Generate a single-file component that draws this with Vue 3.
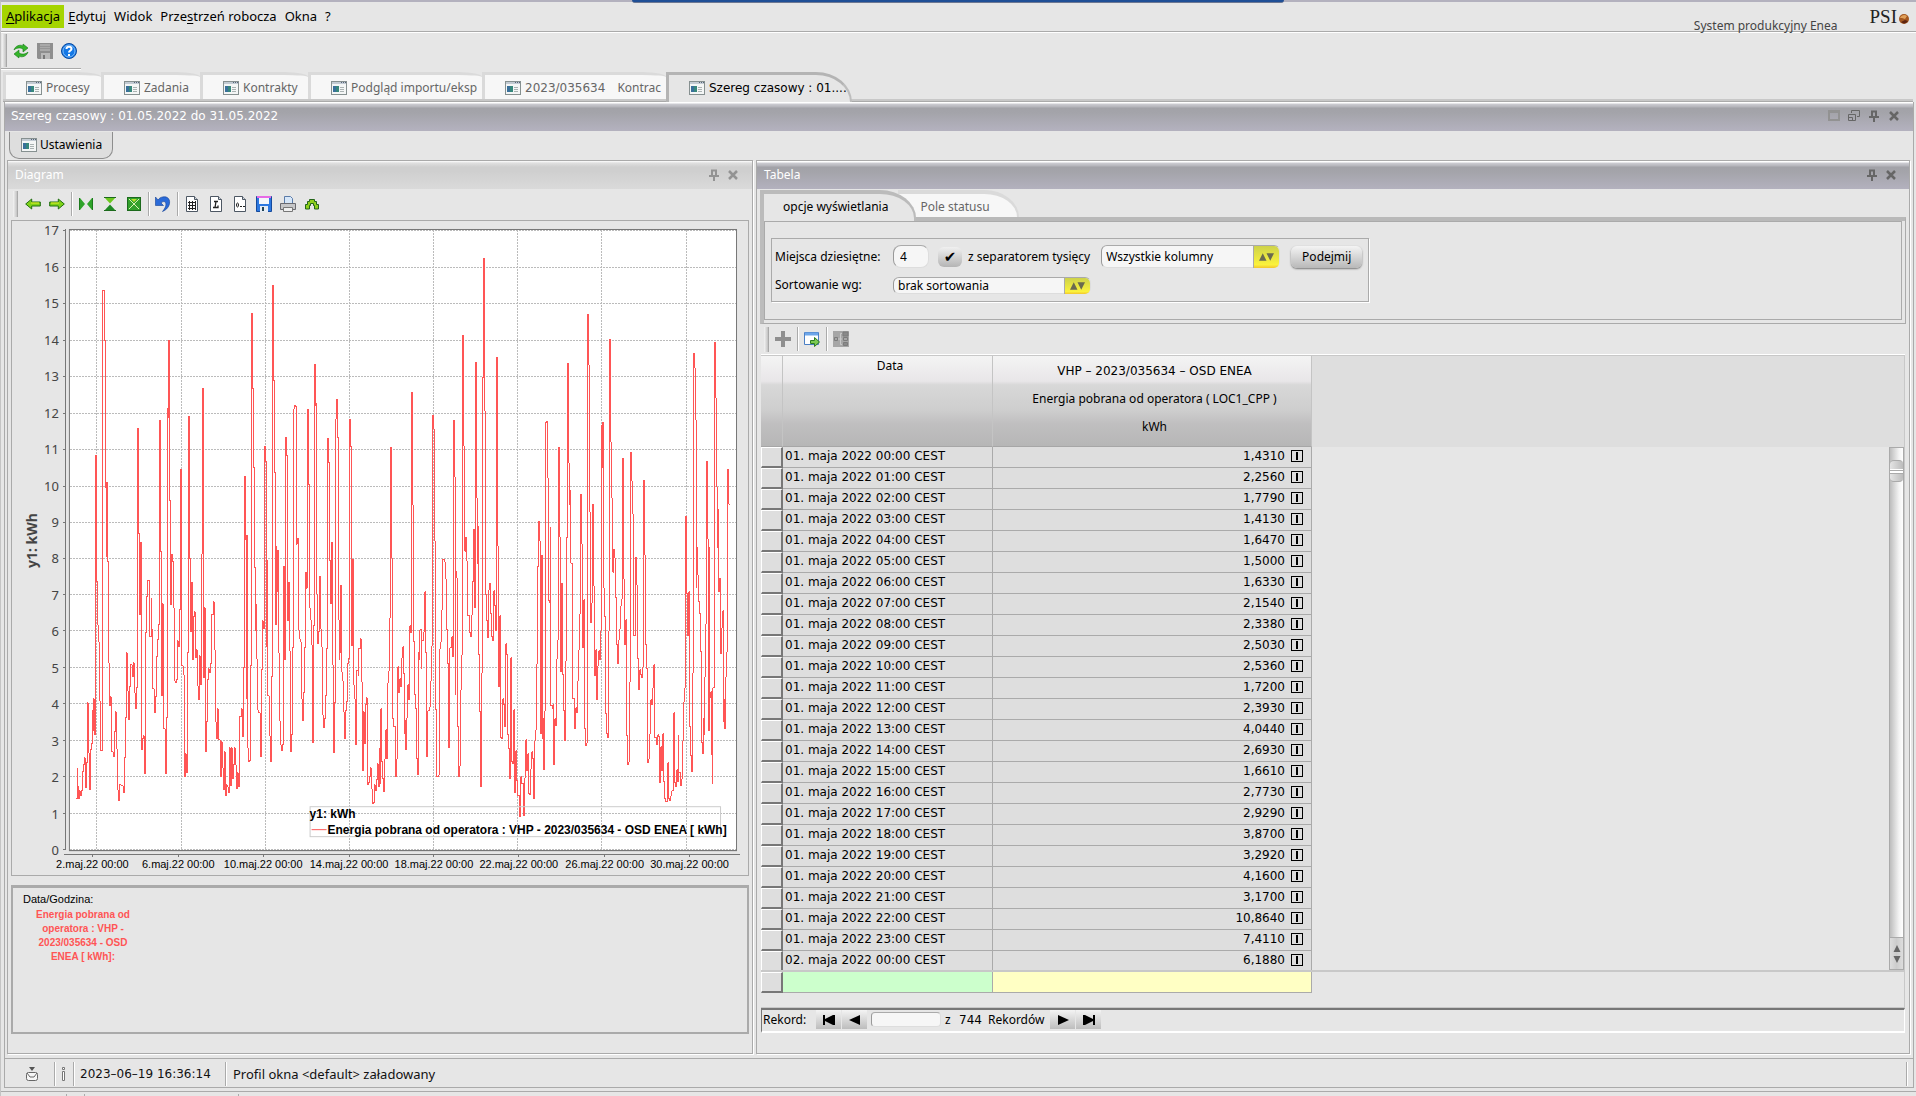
<script setup>
import { ref, computed } from 'vue'

const menu = [
  ['', 'A', 'plikacja'], ['', 'E', 'dytuj'], ['Widok', '', ''],
  ['Prze', 's', 'trzeń robocza'], ['Okna', '', ''], ['?', '', '']
]

const docTabs = [
  { label: 'Procesy', width: 98 },
  { label: 'Zadania', width: 99 },
  { label: 'Kontrakty', width: 108 },
  { label: 'Podgląd importu/eksp', width: 174 },
  { label: '2023/035634', extra: 'Kontrac', width: 184, numeric: true },
  { label: 'Szereg czasowy : 01....', width: 186, active: true, numeric: true }
]

const values = [
  '1,4310', '2,2560', '1,7790', '1,4130', '1,6470', '1,5000', '1,6330', '2,1540',
  '2,3380', '2,5030', '2,5360', '1,7200', '2,3930', '4,0440', '2,6930', '1,6610',
  '2,7730', '2,9290', '3,8700', '3,2920', '4,1600', '3,1700', '10,8640', '7,4110', '6,1880'
]
const rows = values.map((value, i) => ({
  date: `${i < 24 ? '01' : '02'}. maja 2022 ${String(i % 24).padStart(2, '0')}:00 CEST`,
  value
}))

const decimals = ref('4')
const separator = ref(true)
const record = ref('')

/* Load curve as "position,level" pairs, three units to a pixel; level 930 is 0 kWh. */
const trace = `
227,774 230,683 232,735 235,775 238,750 240,766 243,751 246,694 248,674 251,656 253,653 256,742 259,668 261,488 264,636 267,748
269,627 272,610 275,507 277,570 280,475 282,583 285,-258 288,120 290,254 293,304 296,481 299,632 304,632 305,445 307,-752 311,-602
314,-160 317,50 319,-176 322,62 325,367 328,497 331,470 334,634 338,650 341,575 344,515 347,625 350,748 355,781 358,733 362,737
368,758 371,653 374,532 377,338 380,450 383,538 386,440 389,373 395,410 398,368 401,458 404,506 407,442 410,274 412,-338 414,-24
417,223 420,4 422,627 425,596 428,587 431,700 434,277 437,170 440,119 448,290 452,173 454,265 457,445 461,518 466,470 469,350
472,298 475,253 478,-362 480,30 483,466 486,190 488,565 494,700 497,532 500,-398 502,-368 504,-602 507,-122 510,193 513,40 515,60
518,203 521,359 522,422 525,428 527,418 530,302 533,320 536,209 539,-216 542,30 544,376 548,404 551,710 555,640 558,698 560,338
563,-374 566,52 569,275 572,125 575,358 578,230 581,214 584,352 587,328 590,436 593,478 596,347 600,434 603,40 606,-458 608,412
611,203 614,634 617,545 620,418 623,386 626,397 629,370 634,223 638,184 641,328 644,545 648,595 652,505 655,598 659,710 662,604
665,682 668,748 671,634 674,766 677,734 681,740 684,757 686,622 689,737 692,622 695,716 698,673 701,622 705,673 707,745 710,697
713,740 716,670 718,530 722,505 725,590 728,382 731,-194 734,-5 737,476 739,-18 741,622 743,664 747,661 749,376 752,-683 755,-458
758,-221 761,80 764,272 767,190 769,355 772,508 775,517 779,650 782,388 785,241 788,265 791,-284 794,-239 798,320 800,58 802,466
806,586 809,664 812,410 815,-767 818,-482 821,-206 824,254 827,16 829,155 831,28 834,338 836,541 839,613 842,631 845,613 848,76
851,358 854,-311 857,-257 861,241 864,125 867,331 869,634 872,583 875,322 878,-395 881,-407 884,-404 887,10 890,-8 893,268 896,295
900,304 903,475 906,541 908,457 911,322 915,95 918,142 920,-396 923,-170 926,203 929,238 932,313 935,607 938,256 941,-530 944,-407
947,-413 949,160 952,310 955,275 957,106 960,265 963,320 965,523 969,562 973,535 976,466 978,325 981,-308 984,-236 987,58 990,190
992,4 995,373 998,520 1000,637 1002,487 1004,-365 1007,-425 1010,-311 1013,238 1016,358 1018,338 1020,132 1022,394 1026,421
1028,514 1032,596 1035,511 1037,484 1040,370 1043,355 1046,-365 1049,-284 1052,316 1055,55 1058,433 1061,475 1064,613 1067,556
1069,391 1073,406 1075,325 1079,295 1082,424 1085,612 1087,690 1089,514 1092,610 1094,493 1098,472 1100,733 1104,727 1106,710
1109,682 1112,745 1115,790 1119,787 1121,733 1124,751 1127,718 1132,670 1134,739 1137,625 1139,730 1142,505 1145,664 1148,715
1151,754 1154,654 1157,568 1160,655 1163,427 1166,391 1169,233 1172,-281 1175,52 1178,535 1182,560 1187,710 1191,655 1193,568
1195,380 1198,457 1199,415 1202,440 1205,353 1208,320 1211,400 1214,580 1217,537 1219,628 1221,532 1224,433 1227,478 1229,256
1232,277 1235,-446 1238,-106 1241,304 1244,463 1247,505 1250,655 1253,703 1256,335 1259,358 1261,268 1265,385 1267,301 1272,274
1274,154 1277,338 1280,412 1282,650 1285,511 1289,499 1292,421 1295,316 1298,-377 1301,-335 1304,1 1307,508 1310,583 1312,710
1317,703 1319,325 1322,304 1325,290 1327,208 1330,55 1334,64 1337,116 1340,268 1343,370 1346,469 1348,622 1351,322 1355,290
1358,349 1361,-362 1364,-190 1367,463 1369,92 1371,112 1373,559 1376,710 1379,676 1382,448 1385,343 1388,-617 1391,-284 1394,31
1397,-11 1400,62 1403,95 1405,226 1409,277 1414,289 1415,223 1418,121 1421,-35 1424,202 1427,-536 1430,-128 1433,70 1435,-44
1437,343 1439,514 1442,739 1445,397 1448,-491 1451,-848 1454,-388 1457,163 1460,241 1463,292 1466,148 1469,126 1472,220 1475,289
1478,301 1481,151 1484,196 1487,271 1490,-551 1493,16 1496,439 1499,226 1502,592 1506,596 1508,475 1511,494 1514,559 1517,310
1520,343 1523,583 1526,625 1529,715 1532,352 1535,664 1538,670 1541,508 1544,757 1547,631 1550,721 1555,766 1559,829 1562,710
1567,730 1571,826 1574,712 1577,598 1580,691 1583,640 1586,760 1589,764 1592,685 1595,634 1598,655 1601,775 1604,601 1607,568
1610,370 1613,76 1616,-59 1619,1 1622,580 1625,43 1628,595 1630,535 1633,688 1635,511 1637,-356 1640,-359 1643,-188 1646,181
1650,187 1652,-41 1654,496 1658,505 1659,493 1661,673 1664,535 1667,556 1670,355 1673,298 1676,-281 1679,-11 1682,394 1685,127
1688,403 1691,511 1694,601 1697,361 1700,-11 1703,-533 1706,-233 1709,-107 1712,-152 1714,67 1718,118 1720,475 1724,565 1727,502
1730,517 1733,421 1736,328 1739,220 1742,-140 1745,10 1748,322 1751,178 1754,565 1757,616 1760,607 1763,-680 1766,-527 1769,-86
1772,247 1775,187 1778,-110 1781,136 1784,406 1787,328 1790,478 1793,376 1796,331 1799,358 1802,271 1805,-347 1807,-222 1809,-356
1812,142 1815,229 1817,520 1820,580 1823,592 1826,271 1829,-605 1832,-296 1835,-128 1838,94 1841,25 1844,52 1848,172 1851,313
1853,370 1856,298 1859,265 1862,196 1866,175 1868,100 1870,-248 1872,115 1875,313 1878,238 1880,586 1883,673 1886,664 1889,424
1893,-119 1894,-266 1896,-179 1900,-80 1903,286 1907,48 1910,133 1913,355 1916,448 1919,388 1922,403 1925,412 1928,380 1931,-182
1934,43 1937,172 1939,313 1942,385 1944,667 1948,655 1949,580 1952,478 1957,493 1959,442 1963,373 1966,592 1970,613 1973,583
1977,590 1979,727 1982,619 1985,691 1988,580 1991,724 1994,775 1998,784 2003,667 2006,775 2010,781 2014,766 2017,751 2021,517
2024,727 2027,739 2030,688 2034,724 2036,583 2038,697 2042,736 2045,715 2048,601 2051,484 2054,442 2057,-74 2060,160 2063,287
2066,154 2069,559 2072,646 2075,694 2078,397 2081,-563 2084,-518 2088,-361 2090,142 2092,19 2094,103 2097,184 2100,220 2103,334
2105,607 2109,640 2111,532 2113,583 2115,410 2117,250 2120,-239 2123,-4 2126,571 2129,19 2131,472 2133,454 2135,643 2138,730
2140,442 2144,-596 2147,-428 2150,-161 2153,22 2155,-95 2157,154 2159,112 2162,340 2165,262 2168,211 2171,544 2173,478 2176,565
2178,409 2181,334 2183,-215 2186,-110 2190,-110`

const tracePath = computed(() =>
  trace.trim().split(/\s+/).map((pair, i) => {
    const [px, level] = pair.split(',').map(Number)
    const x = Math.round(px / 3) - 11.5
    const y = Math.floor(320 + level / 3) + 0.5
    return i ? `H${x}V${y}` : `M${x} ${y}`
  }).join('')
)

const yTicks = Array.from({ length: 18 }, (_, v) => ({ v, y: Math.round(629 - v * 36.45) + 0.5 }))
const xTicks = [
  { day: 2, grid: 84.5, tick: 80.5 }, { day: 6, grid: 169.5, tick: 166.5 },
  { day: 10, grid: 253.5, tick: 251.5 }, { day: 14, grid: 337.5, tick: 337.5 },
  { day: 18, grid: 422.5, tick: 422.5 }, { day: 22, grid: 506.5, tick: 507.5 },
  { day: 26, grid: 590.5, tick: 593.5 }, { day: 30, grid: 675.5, tick: 678.5 }
]
</script>

<template>
  <svg class="symbols" aria-hidden="true">
    <symbol id="win" viewBox="0 0 16 16">
      <rect x=".5" y="1.5" width="15" height="13" fill="#f4f6f6" stroke="#869090" />
      <path d="M1 3h14" stroke="#c3cbd3" stroke-width="2" />
      <path d="M10 2.5h1M12 2.5h1M14 2.5h1" stroke="#56657a" />
      <rect x="2" y="6" width="6" height="6" fill="#37877c" />
      <path d="M2 6h3v6H2z" fill="#39709a" />
      <path d="M9 7.5h4M9 9.5h4M9 11.5h4" stroke="#aab2b2" />
    </symbol>
    <symbol id="pin" viewBox="0 0 12 12">
      <path d="M4 1v6M8 1v6M3 1.500h6M1 7h10M6 7v5" fill="none" stroke="currentColor" stroke-width="2" />
    </symbol>
    <symbol id="close" viewBox="0 0 12 12">
      <path d="M2 2l8 8M10 2l-8 8" stroke="currentColor" stroke-width="2.500" />
    </symbol>
    <symbol id="sheet" viewBox="0 0 16 16">
      <path d="M2.500 .5h8l3 3v12h-11z" fill="#fff" stroke="#4d5763" />
      <path d="M10.500 .5v3h3" fill="#cfd6dd" stroke="#4d5763" />
    </symbol>
    <symbol id="arrows" viewBox="0 0 16 8">
      <path d="M0 8L4 0l4 8zM8 0h8l-4 8z" fill="#6a6a50" />
    </symbol>
  </svg>

  <div class="app">
    <div class="notch"></div>
    <header class="menubar">
      <nav class="menu">
        <button v-for="(m, i) in menu" :key="i" :class="{ on: i === 0 }">{{ m[0] }}<u>{{ m[1] }}</u>{{ m[2] }}</button>
      </nav>
      <span class="system">System produkcyjny Enea</span>
      <span class="logo">PSI<svg width="12" height="12" viewBox="0 0 12 12"><circle cx="6" cy="6" r="5" fill="#a4571f" /><path d="M2 5c1-3 5-4 7-2l-2 3-3-1z" fill="#e0a05a" /><path d="M3 9c2 2 5 2 7-1l-3-1z" fill="#5d2410" /></svg></span>
    </header>

    <div class="toolbar main-tools">
      <i class="grip"></i>
      <button title="Odśwież"><svg width="16" height="16" viewBox="0 0 16 16"><path d="M1 7c1-4 6-6 9-4V1l5 4-5 4V6C7 4 3 5 1 7z" fill="#35b52b" stroke="#157a15" stroke-width=".6" /><path d="M15 9c-1 4-6 6-9 4v2l-5-4 5-4v3c3 2 7 1 9-1z" fill="#35b52b" stroke="#157a15" stroke-width=".6" /></svg></button>
      <button title="Zapisz"><svg width="16" height="16" viewBox="0 0 16 16"><path d="M0 0h16v16H1l-1-1z" fill="#8e8e8e" /><path d="M3 1h10v7H3z" fill="#a9a9a9" /><path d="M3 3.500h10M3 5.500h10" stroke="#959595" /><path d="M4 10h9v6H4z" fill="#b9b9b9" /><path d="M6 12h2v4H6z" fill="#777" /></svg></button>
      <button title="Pomoc"><svg width="16" height="16" viewBox="0 0 16 16"><circle cx="8" cy="8" r="7.500" fill="#1478e6" stroke="#0a4aa0" /><circle cx="8" cy="8" r="6" fill="none" stroke="#7db9f5" /><path d="M5.500 6c0-3 5-3 5 0 0 1.500-2.500 1.500-2.500 3.500M8 11v2" fill="none" stroke="#fff" stroke-width="2" /></svg></button>
    </div>

    <div class="doc-tabs">
      <button v-for="t in docTabs" :key="t.label" class="doc-tab" :class="{ active: t.active }" :style="{ width: t.width + 'px' }">
        <svg width="16" height="16"><use href="#win" /></svg><span :class="{ figures: t.numeric }">{{ t.label }}</span><span v-if="t.extra" class="extra">{{ t.extra }}</span>
      </button>
    </div>

    <main class="workspace">
      <div class="titlebar outer">
        <span class="figures">Szereg czasowy : 01.05.2022 do 31.05.2022</span>
        <span class="controls">
          <button title="Maksymalizuj" class="dim"><svg width="12" height="12" viewBox="0 0 12 12"><path d="M1 1h10v9H1z" fill="none" stroke="currentColor" stroke-width="2" /><path d="M0 2h12" stroke="currentColor" stroke-width="2" /></svg></button>
          <button title="Odepnij"><svg width="12" height="12" viewBox="0 0 12 12"><path d="M3.500 3V.5h8v6H9M.5 4.500h7v6h-7zM.5 7.500h4v3" fill="none" stroke="currentColor" /></svg></button>
          <button title="Przypnij"><svg width="12" height="12"><use href="#pin" /></svg></button>
          <button title="Zamknij"><svg width="12" height="12"><use href="#close" /></svg></button>
        </span>
      </div>

      <button class="settings"><svg width="16" height="16"><use href="#win" /></svg><span>Ustawienia</span></button>

      <div class="panes">
        <section class="pane">
          <div class="titlebar pale">
            <span>Diagram</span>
            <span class="controls">
              <button title="Przypnij"><svg width="12" height="12"><use href="#pin" /></svg></button>
              <button title="Zamknij"><svg width="12" height="12"><use href="#close" /></svg></button>
            </span>
          </div>
          <div class="toolbar chart-tools">
            <i class="grip"></i>
            <button title="Wstecz"><svg width="16" height="16" viewBox="0 0 16 16"><path d="M.7 8l6-5v3h8.600v4H6.700v3z" fill="#7fd219" stroke="#1f6e12" /><path d="M6 7h8" stroke="#e8f02a" /></svg></button>
            <button title="Dalej"><svg width="16" height="16" viewBox="0 0 16 16"><path d="M15.300 8l-6-5v3H.7v4h8.600v3z" fill="#7fd219" stroke="#1f6e12" /><path d="M2 7h8" stroke="#e8f02a" /></svg></button>
            <i class="sep"></i>
            <button title="Skala X"><svg width="16" height="16" viewBox="0 0 16 16"><path d="M2 2v12l5-6zM14 2v12L9 8z" fill="#2fa32a" /><path d="M1.500 2v12M14.500 2v12" stroke="#1c7a1c" /></svg></button>
            <button title="Skala Y"><svg width="16" height="16" viewBox="0 0 16 16"><path d="M2 1h12L8 7.500z" fill="#6cc81e" /><path d="M2 15h12L8 8.500z" fill="#1f8a25" /><path d="M2 1.500h12M2 14.500h12" stroke="#1c6a1c" /></svg></button>
            <button title="Dopasuj"><svg width="16" height="16" viewBox="0 0 16 16"><rect x="1.500" y="1.500" width="13" height="13" fill="#32a02c" stroke="#1c6a1c" /><path d="M3 3l10 10M13 3L3 13" stroke="#d8f0b0" /><path d="M5 3h6L8 6z" fill="#b5e02a" /></svg></button>
            <i class="sep"></i>
            <button title="Cofnij"><svg width="16" height="16" viewBox="0 0 16 16"><path d="M.5 1v8.500h8L6 7c4-4 8 1 1.500 8.500C17 12 17-1 7.500 1 5.500 1.300 4 2.500 3 4z" fill="#2a6ad8" stroke="#123f94" stroke-width=".6" /></svg></button>
            <i class="sep"></i>
            <button title="Siatka"><svg width="16" height="16" viewBox="0 0 16 16"><use href="#sheet" /><path d="M5.500 5v9M8.500 5v9M11.500 5v9M4 6.500h8M4 9.500h8M4 12.500h8" stroke="#222" /></svg></button>
            <button title="Legenda"><svg width="16" height="16" viewBox="0 0 16 16"><use href="#sheet" /><path d="M6 5.500h4M8 5.500l-1 6M5 11.500h5V9.500" fill="none" stroke="#222" stroke-width="1.300" /></svg></button>
            <button title="Zero"><svg width="16" height="16" viewBox="0 0 16 16"><use href="#sheet" /><ellipse cx="5.500" cy="9" rx="1" ry="2" fill="none" stroke="#222" /><path d="M8 10.500h2M11 10.500h2" stroke="#222" /></svg></button>
            <button title="Zapisz"><svg width="16" height="16" viewBox="0 0 16 16"><path d="M.5 .5h15v15h-15z" fill="#2c78e0" stroke="#164a9c" /><path d="M3 1h10v7H3z" fill="#f4f6fa" /><path d="M1 1h14" stroke="#e66be6" stroke-width="2" /><path d="M4 10h8v6H4z" fill="#e6ecf4" /><path d="M6 11h2v4H6z" fill="#245" /></svg></button>
            <button title="Drukuj"><svg width="16" height="16" viewBox="0 0 16 16"><path d="M4.500 8V.5h6l2 2V8" fill="#d6e6f8" stroke="#5a7ba8" /><path d="M.5 7.500h15v6H.5z" fill="#c6c6c8" stroke="#6a6a70" /><path d="M3.500 11.500h9v4h-9z" fill="#f0f0f0" stroke="#777" /></svg></button>
            <button title="Znajdź"><svg width="16" height="16" viewBox="0 0 16 16"><path d="M1.500 13V8.500h2V5.500h2V3.500h5v2h2v3h2V13h-4V9.500h-1v-2h-3v2h-1V13z" fill="#8fd01c" stroke="#24651a" /></svg></button>
          </div>

          <div class="chart">
            <svg class="plot" viewBox="0 0 737 655" role="img" aria-label="Energia pobrana od operatora">
              <rect x="57.500" y="8.500" width="668" height="622" fill="#fff" stroke="#777" />
              <g class="grid">
                <path v-for="t in yTicks" :key="t.v" :d="`M58 ${t.y}H725`" />
                <path v-for="t in xTicks" :key="t.day" :d="`M${t.grid} 9V630`" />
              </g>
              <path class="trace" :d="tracePath" />
              <g class="axis">
                <path d="M53.500 8V630M52 634.500H729M57 630.500H726" />
                <path v-for="t in yTicks" :key="t.v" :d="`M51 ${t.y}h3`" />
                <path v-for="t in xTicks" :key="t.day" :d="`M${t.tick} 635v2`" />
              </g>
              <g class="ylab"><text v-for="t in yTicks" :key="t.v" x="47" :y="t.y + 5">{{ t.v }}</text></g>
              <g class="xlab"><text v-for="t in xTicks" :key="t.day" :x="t.tick" y="648">{{ t.day }}.maj.22 00:00</text></g>
              <text class="ytitle" transform="translate(25 320) rotate(-90)">y1: kWh</text>
              <rect x="298.500" y="586.500" width="411" height="30" fill="none" stroke="#ccc" />
              <path d="M300 609.500h15" stroke="#ff5555" />
              <g class="legend"><text x="298" y="598">y1: kWh</text><text x="316" y="614">Energia pobrana od operatora : VHP - 2023/035634 - OSD ENEA [ kWh]</text></g>
            </svg>
          </div>

          <div class="readout">
            <p>Data/Godzina:</p>
            <p class="series">Energia pobrana od operatora : VHP - 2023/035634 - OSD ENEA [ kWh]:</p>
          </div>
        </section>

        <section class="pane">
          <div class="titlebar inner">
            <span>Tabela</span>
            <span class="controls">
              <button title="Przypnij"><svg width="12" height="12"><use href="#pin" /></svg></button>
              <button title="Zamknij"><svg width="12" height="12"><use href="#close" /></svg></button>
            </span>
          </div>

          <div class="opt-tabs">
            <button class="opt-tab active">opcje wyświetlania</button>
            <button class="opt-tab">Pole statusu</button>
          </div>
          <div class="opt-page"><div class="opt-inner">
            <form class="options" @submit.prevent>
              <div class="line">
                <label class="first" for="dec">Miejsca dziesiętne:</label>
                <input id="dec" v-model="decimals" class="field dec" type="text">
                <input id="sep" v-model="separator" class="tick" type="checkbox">
                <label for="sep">z separatorem tysięcy</label>
                <span class="combo wide"><select aria-label="Kolumny"><option>Wszystkie kolumny</option></select><span class="knob"><svg width="15" height="8"><use href="#arrows" /></svg></span></span>
                <button class="apply">Podejmij</button>
              </div>
              <div class="line">
                <label class="first" for="sort">Sortowanie wg:</label>
                <span class="combo sort"><select id="sort"><option>brak sortowania</option></select><span class="knob"><svg width="15" height="8"><use href="#arrows" /></svg></span></span>
              </div>
            </form>
          </div></div>

          <div class="toolbar table-tools">
            <i class="grip"></i>
            <button title="Dodaj"><svg width="16" height="16" viewBox="0 0 16 16"><path d="M6 0h4v6h6v4h-6v6H6v-6H0V6h6z" fill="#8f8f8f" /></svg></button>
            <i class="sep"></i>
            <button title="Eksport"><svg width="16" height="16" viewBox="0 0 16 16"><path d="M.5 1.500h14v12H.5z" fill="#fff" stroke="#4b7fc4" /><path d="M1 3h13" stroke="#6da6ea" stroke-width="3" /><path d="M6.500 9.500h4v-3l5 4.500-5 4.500v-3h-4z" fill="#7ccb52" stroke="#2c7a22" /></svg></button>
            <i class="sep"></i>
            <button title="Struktura"><svg width="16" height="16" viewBox="0 0 16 16"><path d="M0 0h16v16H0z" fill="#a6a6a6" /><path d="M9 2.500H7.500v11H9M5 8h4" fill="none" stroke="#c8c8c8" /><path d="M1.500 6.500h3v3h-3zM10.500 6.500h4v3h-4z" fill="none" stroke="#7c7c7c" /><path d="M10 1h5v4h-5zM10.500 11.500h4v3h-4z" fill="#8a8a8a" stroke="#7c7c7c" /></svg></button>
          </div>

          <div class="grid-area">
            <div class="grid-body">
              <table>
                <colgroup><col class="c0"><col class="c1"><col class="c2"></colgroup>
                <thead><tr>
                  <th></th><th class="date-head">Data</th>
                  <th><div class="figures">VHP – 2023/035634 – OSD ENEA</div><div>Energia pobrana od operatora ( LOC1_CPP )</div><div>kWh</div></th>
                </tr></thead>
                <tbody>
                  <tr v-for="r in rows" :key="r.date">
                    <td class="handle"></td><td class="date">{{ r.date }}</td>
                    <td class="num"><div><span>{{ r.value }}</span><i class="mark"></i></div></td>
                  </tr>
                </tbody>
              </table>
              <div class="scroll"><span class="thumb"></span><span class="steps"><svg width="8" height="18" viewBox="0 0 8 18"><path d="M4 0l3.500 7h-7zM4 18l3.500-7h-7z" fill="#666" /></svg></span></div>
            </div>
            <table class="sums">
              <colgroup><col class="c0"><col class="c1"><col class="c2"></colgroup>
              <tbody><tr><td class="handle"></td><td class="green"></td><td class="yellow"></td></tr></tbody>
            </table>
          </div>

          <div class="records">
            <label for="rec">Rekord:</label>
            <button title="Pierwszy"><svg width="12" height="10" viewBox="0 0 12 10"><path d="M0 0h2v4l8-4h2v10h-2L2 6v4H0z" /></svg></button>
            <button title="Poprzedni"><svg width="12" height="10" viewBox="0 0 12 10"><path d="M11 0v10L0 5z" /></svg></button>
            <input id="rec" v-model="record" class="field rec" type="text">
            <span class="of">z</span><span class="count">744</span><span class="word">Rekordów</span>
            <button title="Następny"><svg width="12" height="10" viewBox="0 0 12 10"><path d="M1 0v10l11-5z" /></svg></button>
            <button title="Ostatni"><svg width="12" height="10" viewBox="0 0 12 10"><path d="M12 0h-2v4L2 0H0v10h2l8-4v4h2z" /></svg></button>
          </div>
        </section>
      </div>

      <footer class="status">
        <span class="mail"><svg width="14" height="14" viewBox="0 0 14 14"><path d="M4 0h6L7 4z" fill="#555" /><rect x="1.500" y="5.500" width="11" height="8" rx="2" fill="#f6f6f6" stroke="#666" /><path d="M2 6l3 4h4l3-4" fill="none" stroke="#666" /></svg></span>
        <span class="info"><svg width="4" height="14" viewBox="0 0 4 14"><path d="M.5 .5h2v2h-2zM.5 4.500h2v9h-2z" fill="#fff" stroke="#777" /></svg></span>
        <span class="stamp figures">2023–06–19 16:36:14</span>
        <span class="message">Profil okna &lt;default&gt; załadowany</span>
      </footer>
    </main>
    <div class="underbar"><i></i><i></i><i></i></div>
  </div>
</template>

<style>
body { background: #e6e6e6; }
</style>

<style scoped>
.symbols { position: absolute; width: 0; height: 0; }
.app { min-height: 100vh; box-sizing: border-box; border-top: 2px solid #b3b1be; border-left: 1px solid #c4c4c4; background: #e6e6e6; color: #000; font: 12px/16px "Noto Sans", sans-serif; display: flex; flex-direction: column; overflow: hidden; }
.figures { font-family: "DejaVu Sans", sans-serif; }
button { border: 0; padding: 0; margin: 0; background: none; font: inherit; color: inherit; display: flex; align-items: center; flex: none; }
svg { display: block; flex: none; }
.notch { position: absolute; top: 0; left: 33%; width: 34%; height: 3px; box-sizing: border-box; background: #1f4f96; border-bottom: 1px solid #6d7893; border-radius: 0 0 4px 4px; }

.menubar { display: flex; height: 29px; border-bottom: 1px solid #aaa; box-shadow: 0 1px #fff; }
.menu { display: flex; flex: 1; padding: 3px 0 0 1px; font-size: 13px; }
.menu button { height: 23px; padding: 0 4px 2px; display: block; }
.menu .on { background: #a5d400; }
.menu u { text-underline-offset: 2px; }
.system { color: #444; padding-top: 16px; height: 13px; line-height: 16px; }
.logo { display: flex; align-items: center; gap: 1px; height: 20px; margin: 5px 6px 0 32px; font: 19px/20px "Liberation Serif", serif; color: #222; }
.logo svg { margin-top: 4px; }

.toolbar { display: flex; align-items: center; }
.grip { width: 5px; height: 26px; margin-right: 5px; background: linear-gradient(90deg, #f4f4f4, #c8c8c8 70%, #999); flex: none; }
.sep { width: 1px; height: 24px; background: #aaa; box-shadow: 1px 0 #fff; flex: none; }
.main-tools { align-self: flex-start; width: 80px; height: 36px; margin-top: 1px; gap: 8px; padding-left: 1px; border-bottom: 1px solid #aaa; box-shadow: 0 1px #fff; box-sizing: border-box; }
.main-tools .grip { height: 33px; margin-right: -2px; }

.doc-tabs { display: flex; height: 30px; margin: 3px 3px 0 2px; border-bottom: 1px solid #aaa; background: linear-gradient(#e6e6e6 27px, #c8c8c8 27px); box-sizing: border-box; }
.doc-tab { height: 27px; box-sizing: border-box; padding: 2px 0 0 20px; gap: 4px; border-top: 3px solid #dadada; border-left: 3px solid #dadada; background: #f7f7f7; color: #666; overflow: hidden; white-space: nowrap; border-radius: 0 24px 0 0 / 0 5px 0 0; }
.doc-tab .extra { padding-left: 8px; }
.doc-tab.active { height: 30px; padding-bottom: 3px; background: #e6e6e6; color: #000; border-color: #b4b4b4; border-right: 2px solid #bdbdbd; border-radius: 0 36px 0 0 / 0 30px 0 0; }

.workspace { flex: 1; display: flex; flex-direction: column; margin: 0 2px 0 3px; border: 1px solid #aaa; border-top: 0; }
.titlebar { display: flex; align-items: center; justify-content: space-between; height: 28px; box-sizing: border-box; padding: 0 12px 0 7px; color: #fff; background: linear-gradient(#fff 0, #fff 1px, #ccccd2 2px, #b4b4ba 5px, #a2a2a8 6px, #a4a4aa 11px, #b3b1be 28px); }
.titlebar.outer { padding: 0 13px 2px 6px; height: 29px; }
.titlebar.pale { background: linear-gradient(#fff 0, #e0e0e0 2px, #cfcfcf 6px, #cfcfcf 10px, #dadada 28px); padding: 0 13px 0 7px; }
.controls { display: flex; gap: 8px; color: #666; }
.pale .controls, .inner .controls { gap: 7px; padding-bottom: 1px; }
.pale .controls { color: #939393; }
.dim { color: #929292; }
.settings { align-self: flex-start; height: 27px; width: 104px; box-sizing: border-box; margin: 1px 0 0 4px; padding-left: 11px; gap: 3px; background: #dedede; border: 1px solid #8e8e8e; border-top: 0; border-radius: 0 0 10px 10px; }

.panes { flex: 1; display: grid; grid-template-columns: 746px 1fr; column-gap: 3px; padding: 1px 3px 0 2px; }
.pane { border: 1px solid #aaa; box-shadow: 1px 1px #fff; display: flex; flex-direction: column; min-width: 0; box-sizing: border-box; height: 894px; }

.chart-tools { height: 26px; margin: 2px 0 0 5px; gap: 8px; }
.chart-tools .grip { margin-right: -1px; }
.chart-tools .sep { margin: 0 -2px; }
.chart { margin: 3px 3px 0; border: 1px solid #aaa; }
.plot { width: 100%; }
.grid path { fill: none; stroke: #bbb; stroke-dasharray: 2 1; shape-rendering: crispEdges; }
.trace { fill: none; stroke: #ff5555; shape-rendering: crispEdges; }
.axis path { fill: none; stroke: #777; shape-rendering: crispEdges; }
.ylab { font: 13px "Noto Sans", sans-serif; fill: #444; text-anchor: end; }
.xlab { font: 11px "Liberation Sans", sans-serif; fill: #000; text-anchor: middle; }
.ytitle { font: bold 14px "Noto Sans", sans-serif; fill: #444; text-anchor: middle; }
.legend { font: bold 12px "Liberation Sans", sans-serif; }
.readout { height: 149px; box-sizing: border-box; margin: 9px 3px 0; border: 2px solid #aaa; border-top-width: 3px; padding: 4px 10px; font: 11px/14px "Liberation Sans", sans-serif; }
.readout p { margin: 0 0 2px; }
.readout .series { width: 104px; margin-left: 8px; text-align: center; font-weight: bold; font-size: 10px; color: #ff5555; }

.opt-tabs { display: flex; margin: 1px 0 0 3px; position: relative; z-index: 1; }
.opt-tab { height: 27px; box-sizing: border-box; border-top: 4px solid #dadada; border-right: 2px solid #dadada; background: #f7f7f7; color: #666; padding: 2px 27px 0 22px; margin-left: -18px; border-radius: 0 36px 0 0 / 0 28px 0 0; }
.opt-tab.active { height: 31px; position: relative; z-index: 1; margin: 0; padding: 2px 26px 4px 19px; background: #e6e6e6; color: #000; border-color: #bbb; border-left: 4px solid #bbb; }
.opt-page { margin: -4px 3px 0; border: solid #aaa; border-width: 4px 1px 1px 4px; border-color: #b9b9b9 #aaa #aaa #bcbcbc; padding: 0 3px 3px 0; }
.opt-inner { border: 1px solid #aaa; padding: 16px 7px 17px 6px; }
.options { width: 598px; box-sizing: border-box; height: 64px; border: 1px solid #aaa; box-shadow: 1px 1px #fff; padding: 6px 3px; display: flex; flex-direction: column; gap: 7px; }
.line { display: flex; align-items: center; height: 23px; white-space: nowrap; }
.first { width: 118px; flex: none; }
.field { font: inherit; border: 1px solid #ddd; border-left-color: #999; border-top-color: #aaa; border-radius: 8px; background: #f6f6f6; box-sizing: border-box; outline: 0; }
.dec { width: 36px; height: 23px; padding: 0 6px; margin-right: 9px; }
.tick { appearance: none; width: 24px; height: 20px; margin: 0 6px 0 0; border-radius: 6px; background: linear-gradient(#f0f0f0, #b4b4b4); display: flex; align-items: center; justify-content: center; }
.tick:checked::after { content: "✔"; font: 15px/18px "DejaVu Sans", sans-serif; color: #000; }
.combo { position: relative; display: flex; box-sizing: border-box; }
.combo select { appearance: none; flex: 1; font: inherit; color: #000; padding: 0 30px 0 4px; border: 1px solid #ddd; border-top-color: #aaa; border-left-color: #999; border-radius: 6px; background: #f6f6f6; }
.knob { position: absolute; top: 1px; right: 1px; bottom: 0; width: 26px; display: flex; align-items: center; justify-content: center; background: linear-gradient(#cdd24a, #fbf23c 85%, #f2c62e); border-radius: 0 5px 5px 0; pointer-events: none; box-sizing: border-box; border-left: 1px solid #aaa; }
.wide { width: 179px; height: 23px; margin-left: 11px; }
.sort { width: 198px; height: 17px; }
.apply { width: 71px; height: 22px; justify-content: center; margin-left: 11px; background: linear-gradient(#f4f4f4, #b8b8b8); border-radius: 6px; box-shadow: 0 1px 2px #777; }

.table-tools { height: 26px; margin: 2px 0 0 7px; gap: 7px; }
.table-tools .grip { height: 25px; margin-right: -1px; }
.table-tools .sep { margin: 0 -1px; }
.grid-area { margin: 3px 4px 0; height: 653px; border: 1px solid #c8c8c8; border-left: 0; box-shadow: 0 -1px #fff; box-sizing: border-box; }
.grid-body { display: flex; justify-content: space-between; height: 614px; overflow: hidden; border-bottom: 2px solid #c8c8c8; background: linear-gradient(#dedede 91px, transparent 91px); }
table { border-collapse: separate; border-spacing: 0; table-layout: fixed; width: 551px; }
.c0 { width: 22px; } .c1 { width: 210px; } .c2 { width: 319px; }
th { height: 91px; box-sizing: border-box; padding: 0 0 0 5px; font-weight: normal; vertical-align: top; border-right: 1px solid #c4c4c4; border-bottom: 1px solid #a6a6a6; background: linear-gradient(#f4f4f4, #e8e6e8 28%, #d8d8d8 32%, #cecece 60%, #c0bfc0 75%, #b6b6b6); }
th div { padding-top: 7px; height: 21px; line-height: 16px; }
.date-head { padding-top: 2px; }
td { height: 21px; box-sizing: border-box; padding: 0 2px 2px; line-height: 16px; background: #dedede; border-right: 1px solid #aaa; border-bottom: 1px solid #aaa; white-space: nowrap; font-family: "DejaVu Sans", sans-serif; }
.handle { border: solid; border-width: 1px 2px 2px 1px; border-color: #fff #777 #777 #fff; background: #dedede; }
.num div { display: flex; justify-content: flex-end; align-items: center; gap: 6px; padding-right: 6px; }
.mark { width: 12px; height: 12px; box-sizing: border-box; border: 1px solid #000; background: linear-gradient(#000, #000) center / 2px 8px no-repeat; }
.scroll { width: 15px; height: 523px; margin-top: 91px; box-sizing: border-box; border: 1px solid #aaa; background: linear-gradient(90deg, #bdbdbd, #f4f4f4 70%, #fff); display: flex; flex-direction: column; justify-content: space-between; }
.thumb { height: 22px; margin-top: 12px; box-sizing: border-box; border: 1px solid #aaa; border-width: 1px 0; border-radius: 4px; background: linear-gradient(transparent 8px, #fff 8px, #fff 9px, #aaa 9px, #aaa 10px, #fff 10px, #fff 12px, #aaa 12px, #aaa 13px, transparent 13px), linear-gradient(90deg, #e4e4e4, #bcbcbc); }
.steps { height: 31px; display: flex; align-items: center; justify-content: center; border-top: 1px solid #aaa; background: linear-gradient(90deg, #ddd, #ccc, #ddd); }
.sums td { height: 21px; }
.sums .green { background: #ccffcc; }
.sums .yellow { background: #ffffc4; }

.records { display: flex; align-items: center; height: 25px; box-sizing: border-box; margin: 0 4px; padding: 0 1px 2px; border: solid; border-width: 2px 1px 2px 1px; border-color: #777 #fff #fff #777; }
.records label { width: 53px; }
.records button { width: 25px; height: 19px; margin-right: 1px; justify-content: center; background: linear-gradient(#f4f4f4, #bdbdbd); }
.rec { width: 70px; height: 15px; margin: 0 4px 0 3px; border-radius: 4px; padding: 0 4px; }
.of { width: 14px; }
.count { width: 29px; font-family: "DejaVu Sans", sans-serif; }
.word { width: 62px; }

.status { display: flex; align-items: center; height: 29px; margin-top: 4px; border-top: 1px solid #aaa; box-sizing: border-box; color: #111; padding-top: 1px; }
.status span { height: 24px; display: flex; align-items: center; border-right: 1px solid #aaa; box-shadow: 1px 0 #fff; box-sizing: border-box; }
.mail { width: 50px; padding-left: 20px; }
.info { width: 19px; padding-left: 7px; }
.stamp { width: 152px; padding-left: 6px; }
.message { flex: 1; padding-left: 7px; margin-right: 6px; font-size: 13px; }
.underbar { height: 5px; margin-top: 3px; border-top: 1px solid #aaa; box-sizing: border-box; display: flex; align-items: flex-end; }
.underbar i { width: 1px; height: 2px; background: #aaa; margin-left: 65px; }
.underbar i:nth-child(2) { margin-left: 17px; }
.underbar i:nth-child(3) { margin-left: 153px; }
</style>
